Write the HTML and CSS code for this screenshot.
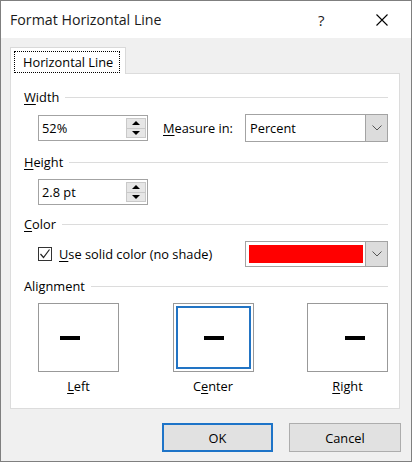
FILE: index.html
```html
<!DOCTYPE html>
<html>
<head>
<meta charset="utf-8">
<link rel="stylesheet" href="styles.css">
</head>
<body>
<div class="dialog">
  <div class="titlebar">
    <span class="title">Format Horizontal Line</span>
    <span class="help">?</span>
    <span class="close"><svg width="12" height="12" viewBox="0 0 12 12"><path d="M0.5 0.5 L11.5 11.5 M11.5 0.5 L0.5 11.5" stroke="#000" stroke-width="1.1" fill="none"/></svg></span>
  </div>
  <div class="content">
    <div class="tabs">
      <div class="tab"><span class="tab-label">Horizontal Line</span></div>
    </div>
    <div class="panel">
      <div class="group-head"><span><u>W</u>idth</span><span class="rule"></span></div>
      <div class="row row-width">
        <div class="spin">
          <span class="spin-text">52%</span>
          <div class="spin-btns">
            <span class="spin-up"><i class="tri-up"></i></span>
            <span class="spin-down"><i class="tri-down"></i></span>
          </div>
        </div>
        <span class="measure"><u>M</u>easure in:</span>
        <div class="combo combo-measure">
          <span class="combo-text">Percent</span>
          <span class="combo-btn"><svg width="10" height="6" viewBox="0 0 10 6"><path d="M0.5 0.5 L5 5 L9.5 0.5" stroke="#555" stroke-width="1" fill="none"/></svg></span>
        </div>
      </div>
      <div class="group-head head-height"><span><u>H</u>eight</span><span class="rule"></span></div>
      <div class="row row-height">
        <div class="spin">
          <span class="spin-text">2.8 pt</span>
          <div class="spin-btns">
            <span class="spin-up"><i class="tri-up"></i></span>
            <span class="spin-down"><i class="tri-down"></i></span>
          </div>
        </div>
      </div>
      <div class="group-head head-color"><span><u>C</u>olor</span><span class="rule"></span></div>
      <div class="row row-color">
        <span class="checkbox"><svg width="12" height="12" viewBox="0 0 12 12"><path d="M1.5 6 L4.5 9.5 L10.5 1.5" stroke="#222" stroke-width="1.2" fill="none"/></svg></span>
        <span class="check-label"><u>U</u>se solid color (no shade)</span>
        <div class="combo combo-color">
          <span class="swatch"></span>
          <span class="combo-btn"><svg width="10" height="6" viewBox="0 0 10 6"><path d="M0.5 0.5 L5 5 L9.5 0.5" stroke="#555" stroke-width="1" fill="none"/></svg></span>
        </div>
      </div>
      <div class="group-head head-align"><span>Alignment</span><span class="rule"></span></div>
      <div class="row row-align">
        <div class="align-col">
          <div class="align-box box-left"><span class="dash"></span></div>
          <span class="align-label"><u>L</u>eft</span>
        </div>
        <div class="align-col">
          <div class="align-box box-center selected"><span class="dash"></span></div>
          <span class="align-label">C<u>e</u>nter</span>
        </div>
        <div class="align-col">
          <div class="align-box box-right"><span class="dash"></span></div>
          <span class="align-label"><u>R</u>ight</span>
        </div>
      </div>
    </div>
    <div class="buttons">
      <button class="btn btn-ok">OK</button>
      <button class="btn btn-cancel">Cancel</button>
    </div>
  </div>
</div>
</body>
</html>
```
FILE: styles.css
```css
html, body {
  margin: 0;
  padding: 0;
  background: #f0f0f0;
}
body {
  font-family: "Open Sans", "Noto Sans", "DejaVu Sans", sans-serif;
  font-size: 12.8px;
  color: #000;
}
u {
  text-decoration: underline;
  text-underline-offset: 2px;
}
.dialog {
  width: 412px;
  height: 462px;
  box-sizing: border-box;
  border: 1px solid #7f7f7f;
  background: #f0f0f0;
  display: flex;
  flex-direction: column;
}
.titlebar {
  height: 37px;
  background: #fff;
  display: flex;
  align-items: center;
  padding-left: 9px;
  flex-shrink: 0;
}
.title {
  font-family: "Open Sans", "Noto Sans", sans-serif;
  font-size: 14.2px;
  flex: 1;
  margin-top: -1px;
  color: #1a1a1a;
}
.help {
  font-family: "Open Sans", sans-serif;
  font-size: 15px;
  width: 10px;
  margin-right: 48px;
  margin-top: 1px;
  color: #1a1a1a;
}
.close {
  display: flex;
  margin-right: 23px;
  margin-top: 1px;
}
.content {
  flex: 1;
  padding: 9px 10px 0 9px;
  display: flex;
  flex-direction: column;
}
.tabs {
  display: flex;
  position: relative;
  z-index: 1;
  margin-bottom: -1px;
}
.tab {
  width: 116px;
  height: 27px;
  box-sizing: border-box;
  background: #fff;
  border: 1px solid #d9d9d9;
  border-bottom: none;
  padding: 3px 5px 0 3px;
}
.tab-label {
  display: flex;
  align-items: center;
  height: 22px;
  box-sizing: border-box;
  border: 1px dotted #000;
  padding-left: 8px;
}
.panel {
  height: 336px;
  box-sizing: border-box;
  margin-right: 1px;
  background: #fff;
  border: 1px solid #dcdcdc;
  padding: 15px 11px 0 13px;
  display: flex;
  flex-direction: column;
}
.group-head {
  display: flex;
  align-items: center;
  gap: 6px;
  height: 16px;
  line-height: 16px;
}
.rule {
  flex: 1;
  height: 1px;
  background: #dcdcdc;
  margin-top: 1px;
}
.row {
  display: flex;
  align-items: center;
  padding-left: 14px;
}
.row-width {
  margin-top: 9px;
  height: 28px;
}
.head-height { margin-top: 12px; }
.row-height {
  margin-top: 9px;
  height: 26px;
}
.head-color { margin-top: 11px; }
.row-color {
  margin-top: 9px;
  height: 26px;
}
.head-align { margin-top: 11px; }
.row-align {
  margin-top: 9px;
  justify-content: space-between;
  align-items: flex-start;
}
.spin {
  width: 110px;
  height: 26px;
  box-sizing: border-box;
  border: 1px solid #a3a3a3;
  display: flex;
  align-items: stretch;
  background: #fff;
}
.spin-text {
  flex: 1;
  display: flex;
  align-items: center;
  padding-left: 3px;
}
.spin-btns {
  width: 18px;
  margin: 2px 1px 2px 0;
  display: flex;
  flex-direction: column;
  border: 1px solid #c9c9c9;
  background: #e6e6e6;
}
.spin-up, .spin-down {
  flex: 1;
  display: flex;
  align-items: center;
  justify-content: center;
}
.spin-up {
  border-bottom: 1px solid #c9c9c9;
}
.tri-up {
  width: 0;
  height: 0;
  border-left: 4px solid transparent;
  border-right: 4px solid transparent;
  border-bottom: 4px solid #000;
}
.tri-down {
  width: 0;
  height: 0;
  border-left: 4px solid transparent;
  border-right: 4px solid transparent;
  border-top: 4px solid #000;
}
.measure {
  margin-left: 15px;
}
.combo {
  margin-left: auto;
  width: 143px;
  box-sizing: border-box;
  border: 1px solid #a3a3a3;
  background: #fff;
  display: flex;
  align-items: stretch;
}
.combo-measure { height: 28px; }
.combo-color { height: 26px; }
.combo-text {
  flex: 1;
  display: flex;
  align-items: center;
  padding-left: 4px;
}
.combo-btn {
  width: 21px;
  background: #dcdcdc;
  border-left: 1px solid #a3a3a3;
  display: flex;
  align-items: center;
  justify-content: center;
}
.swatch {
  flex: 1;
  background: #ff0000;
  margin: 3px 2px 3px 3px;
}
.checkbox {
  width: 14px;
  height: 14px;
  box-sizing: border-box;
  border: 1px solid #333;
  background: #fff;
  display: flex;
  align-items: center;
  justify-content: center;
}
.check-label {
  margin-left: 7px;
}
.align-col {
  display: flex;
  flex-direction: column;
  align-items: center;
  gap: 6px;
}
.align-box {
  width: 81px;
  height: 69px;
  box-sizing: border-box;
  border: 1px solid #999;
  background: #fff;
  display: flex;
  align-items: center;
}
.dash {
  width: 20px;
  height: 4px;
  background: #000;
}
.box-left .dash { margin-left: 21px; }
.box-center { justify-content: center; }
.box-center .dash { margin-left: 1px; }
.box-right { justify-content: flex-end; }
.box-right .dash { margin-right: 22px; }
.selected {
  box-shadow: inset 0 0 0 2px #fff, inset 0 0 0 4px #2274c4;
}
.align-label {
  height: 16px;
  line-height: 16px;
}
.buttons {
  display: flex;
  justify-content: flex-end;
  gap: 16px;
  margin-top: 14px;
}
.btn {
  font-family: inherit;
  font-size: 12.8px;
  color: #000;
  background: #e1e1e1;
  height: 29px;
  box-sizing: border-box;
  padding: 0;
}
.btn-ok {
  width: 111px;
  border: 2px solid #1e74c8;
}
.btn-cancel {
  width: 112px;
  border: 1px solid #adadad;
}
```
